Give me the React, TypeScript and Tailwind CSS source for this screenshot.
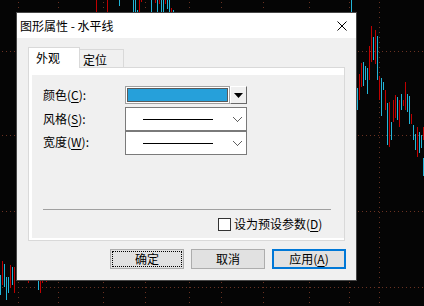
import React from "react";

type Bar = [number, number, number, "r" | "c"];

// x, top, bottom, colour
const bars: Bar[] = [
    [96, 0, 12, "r"], [107, 0, 12, "r"], [119, 0, 6, "c"], [133, 0, 12, "c"], [135, 0, 12, "c"],
    [137, 10, 12, "c"], [139, 0, 12, "r"], [141, 0, 2, "r"], [151, 0, 12, "c"], [155, 0, 3, "r"],
    [157, 0, 12, "c"], [159, 0, 4, "r"], [161, 0, 12, "c"], [163, 0, 12, "c"], [165, 0, 4, "r"],
    [167, 0, 9, "c"], [169, 0, 12, "c"], [171, 8, 12, "r"], [173, 10, 12, "c"], [351, 0, 12, "c"],
    [357, 88, 110, "c"], [359, 74, 100, "r"], [361, 63, 87, "r"], [363, 62, 86, "c"], [365, 66, 80, "c"],
    [367, 68, 94, "c"], [369, 46, 80, "r"], [371, 26, 62, "r"], [373, 37, 60, "c"], [375, 30, 64, "r"],
    [377, 36, 80, "c"], [379, 76, 100, "r"], [381, 78, 116, "c"], [383, 82, 90, "c"], [385, 90, 110, "r"],
    [387, 103, 145, "c"], [389, 102, 147, "r"], [391, 122, 140, "c"], [393, 100, 122, "r"], [395, 95, 118, "r"],
    [397, 97, 120, "c"], [399, 100, 127, "r"], [401, 94, 110, "c"], [403, 100, 106, "r"], [405, 82, 110, "r"],
    [407, 94, 112, "c"], [409, 96, 124, "c"], [411, 114, 124, "r"], [413, 125, 140, "c"], [415, 134, 150, "c"],
    [417, 127, 157, "r"], [419, 132, 153, "c"], [421, 135, 148, "c"], [423, 158, 176, "c"], [423, 127, 140, "r"],
    [0, 275, 295, "c"], [2, 261, 285, "r"], [4, 264, 287, "c"], [6, 277, 300, "c"], [8, 277, 293, "c"],
    [10, 265, 288, "r"], [12, 267, 285, "c"], [14, 267, 293, "r"], [28, 280, 283, "r"], [38, 280, 290, "c"],
    [40, 280, 293, "r"], [42, 280, 283, "r"], [46, 280, 282, "r"],
];

const gridX = [18, 58, 103, 145, 189, 221, 263, 309, 349, 379];
const gridY = [51, 135, 211, 287];

function ChartBackdrop() {
    return (
        <svg className="absolute inset-0" width={424} height={306} shapeRendering="crispEdges">
            <rect width={424} height={306} fill="#050505" />
            {gridX.map((x) => (
                <line key={"x" + x} x1={x + 0.5} y1={2} x2={x + 0.5} y2={306} stroke="#6b3222" strokeDasharray="1 4" />
            ))}
            {gridY.map((y) => (
                <line key={"y" + y} x1={2} y1={y + 0.5} x2={424} y2={y + 0.5} stroke="#6b3222" strokeDasharray="1 3" />
            ))}
            {bars.map(([x, t, b, c], i) => (
                <rect key={i} x={x} y={t} width={1} height={b - t} fill={c === "r" ? "#c00000" : "#22b5d8"} />
            ))}
        </svg>
    );
}

function Chevron() {
    return (
        <svg width={9} height={5} className="mr-[4px]" shapeRendering="crispEdges">
            <polyline points="0.5,0.5 4.5,4.5 8.5,0.5" fill="none" stroke="#606060" strokeWidth={1} />
        </svg>
    );
}

function LineCombo() {
    return (
        <div className="flex h-[24px] w-[122px] items-center justify-between border border-[#7a7a7a] bg-white">
            <div className="ml-[17px] h-px w-[70px] bg-black" />
            <Chevron />
        </div>
    );
}

export default function App() {
    return (
        <div className="relative h-[306px] w-[424px] overflow-hidden bg-black font-['Noto_Sans_CJK_SC','Noto_Sans',sans-serif] text-[12px] leading-[14px] text-black">
            <ChartBackdrop />

            <div className="absolute left-[16px] top-[12px] flex h-[269px] w-[341px] flex-col border border-[#464646] bg-[#f0f0f0]">
                <div className="flex h-[25px] items-center justify-between bg-white pl-[3px] pr-[9px]">
                    <span>图形属性&nbsp;-&nbsp;水平线</span>
                    <svg width={10} height={10}>
                        <line x1={0.5} y1={0.5} x2={9.5} y2={9.5} stroke="#000" strokeWidth={1} />
                        <line x1={9.5} y1={0.5} x2={0.5} y2={9.5} stroke="#000" strokeWidth={1} />
                    </svg>
                </div>

                <div className="flex flex-1 flex-col pl-[11px] pr-[10px] pt-[9px]">
                    <div className="flex h-[20px] items-end">
                        <div className="relative z-10 -mb-px flex h-[21px] w-[52px] items-center border border-b-0 border-[#d9d9d9] bg-white pl-[7px]">
                            外观
                        </div>
                        <div className="flex h-[18px] w-[44px] items-center border-r border-t border-[#d9d9d9] pl-[3px] pt-[2px]">
                            定位
                        </div>
                    </div>

                    <div className="flex h-[174px] w-[317px] border border-[#d9d9d9] bg-white pb-[2px] pl-[3px] pt-[7px]">
                        <div className="flex flex-1 flex-col bg-[#f0f0f0] pt-[11px]">
                            <div className="grid grid-cols-[82px_122px] pl-[11px]">
                                <div className="flex h-[18px] items-center">
                                    颜色(<span className="underline underline-offset-2">C</span>):
                                </div>
                                <div className="flex h-[18px]">
                                    <div className="flex w-[105px] border border-[#a0a0a0] bg-white p-px">
                                        <div className="flex-1 border border-[#5a5a5a] bg-[#26a0da]" />
                                    </div>
                                    <div className="flex w-[17px] items-center justify-center border-b border-l border-r border-t border-b-[#696969] border-l-white border-r-[#696969] border-t-white bg-[#f0f0f0]">
                                        <svg width={9} height={5}>
                                            <polygon points="0,0 9,0 4.5,5" fill="#000" />
                                        </svg>
                                    </div>
                                </div>

                                <div className="mt-[3px] flex h-[24px] items-center">
                                    风格(<span className="underline underline-offset-2">S</span>):
                                </div>
                                <div className="mt-[3px]">
                                    <LineCombo />
                                </div>

                                <div className="flex h-[24px] items-center pb-[3px]">
                                    宽度(<span className="underline underline-offset-2">W</span>):
                                </div>
                                <LineCombo />
                            </div>

                            <div className="ml-[11px] mt-[54px] h-px w-[288px] bg-[#a0a0a0]" />

                            <div className="mt-[7px] flex items-center gap-[3px] pl-[186px]">
                                <div className="h-[13px] w-[13px] border border-[#333] bg-white" />
                                <span>
                                    设为预设参数(<span className="underline underline-offset-2">D</span>)
                                </span>
                            </div>
                        </div>
                    </div>

                    <div className="mt-[8px] flex justify-end gap-[7px]">
                        <div className="h-[20px] w-[74px] border border-[#adadad] bg-[#e1e1e1] p-px">
                            <div className="flex h-full items-center justify-center border border-dotted border-black">确定</div>
                        </div>
                        <div className="flex h-[20px] w-[74px] items-center justify-center border border-[#adadad] bg-[#e1e1e1]">
                            取消
                        </div>
                        <div className="flex h-[20px] w-[74px] items-center justify-center border-2 border-[#0078d7] bg-[#e1e1e1]">
                            应用(<span className="underline underline-offset-2">A</span>)
                        </div>
                    </div>
                </div>
            </div>
        </div>
    );
}
